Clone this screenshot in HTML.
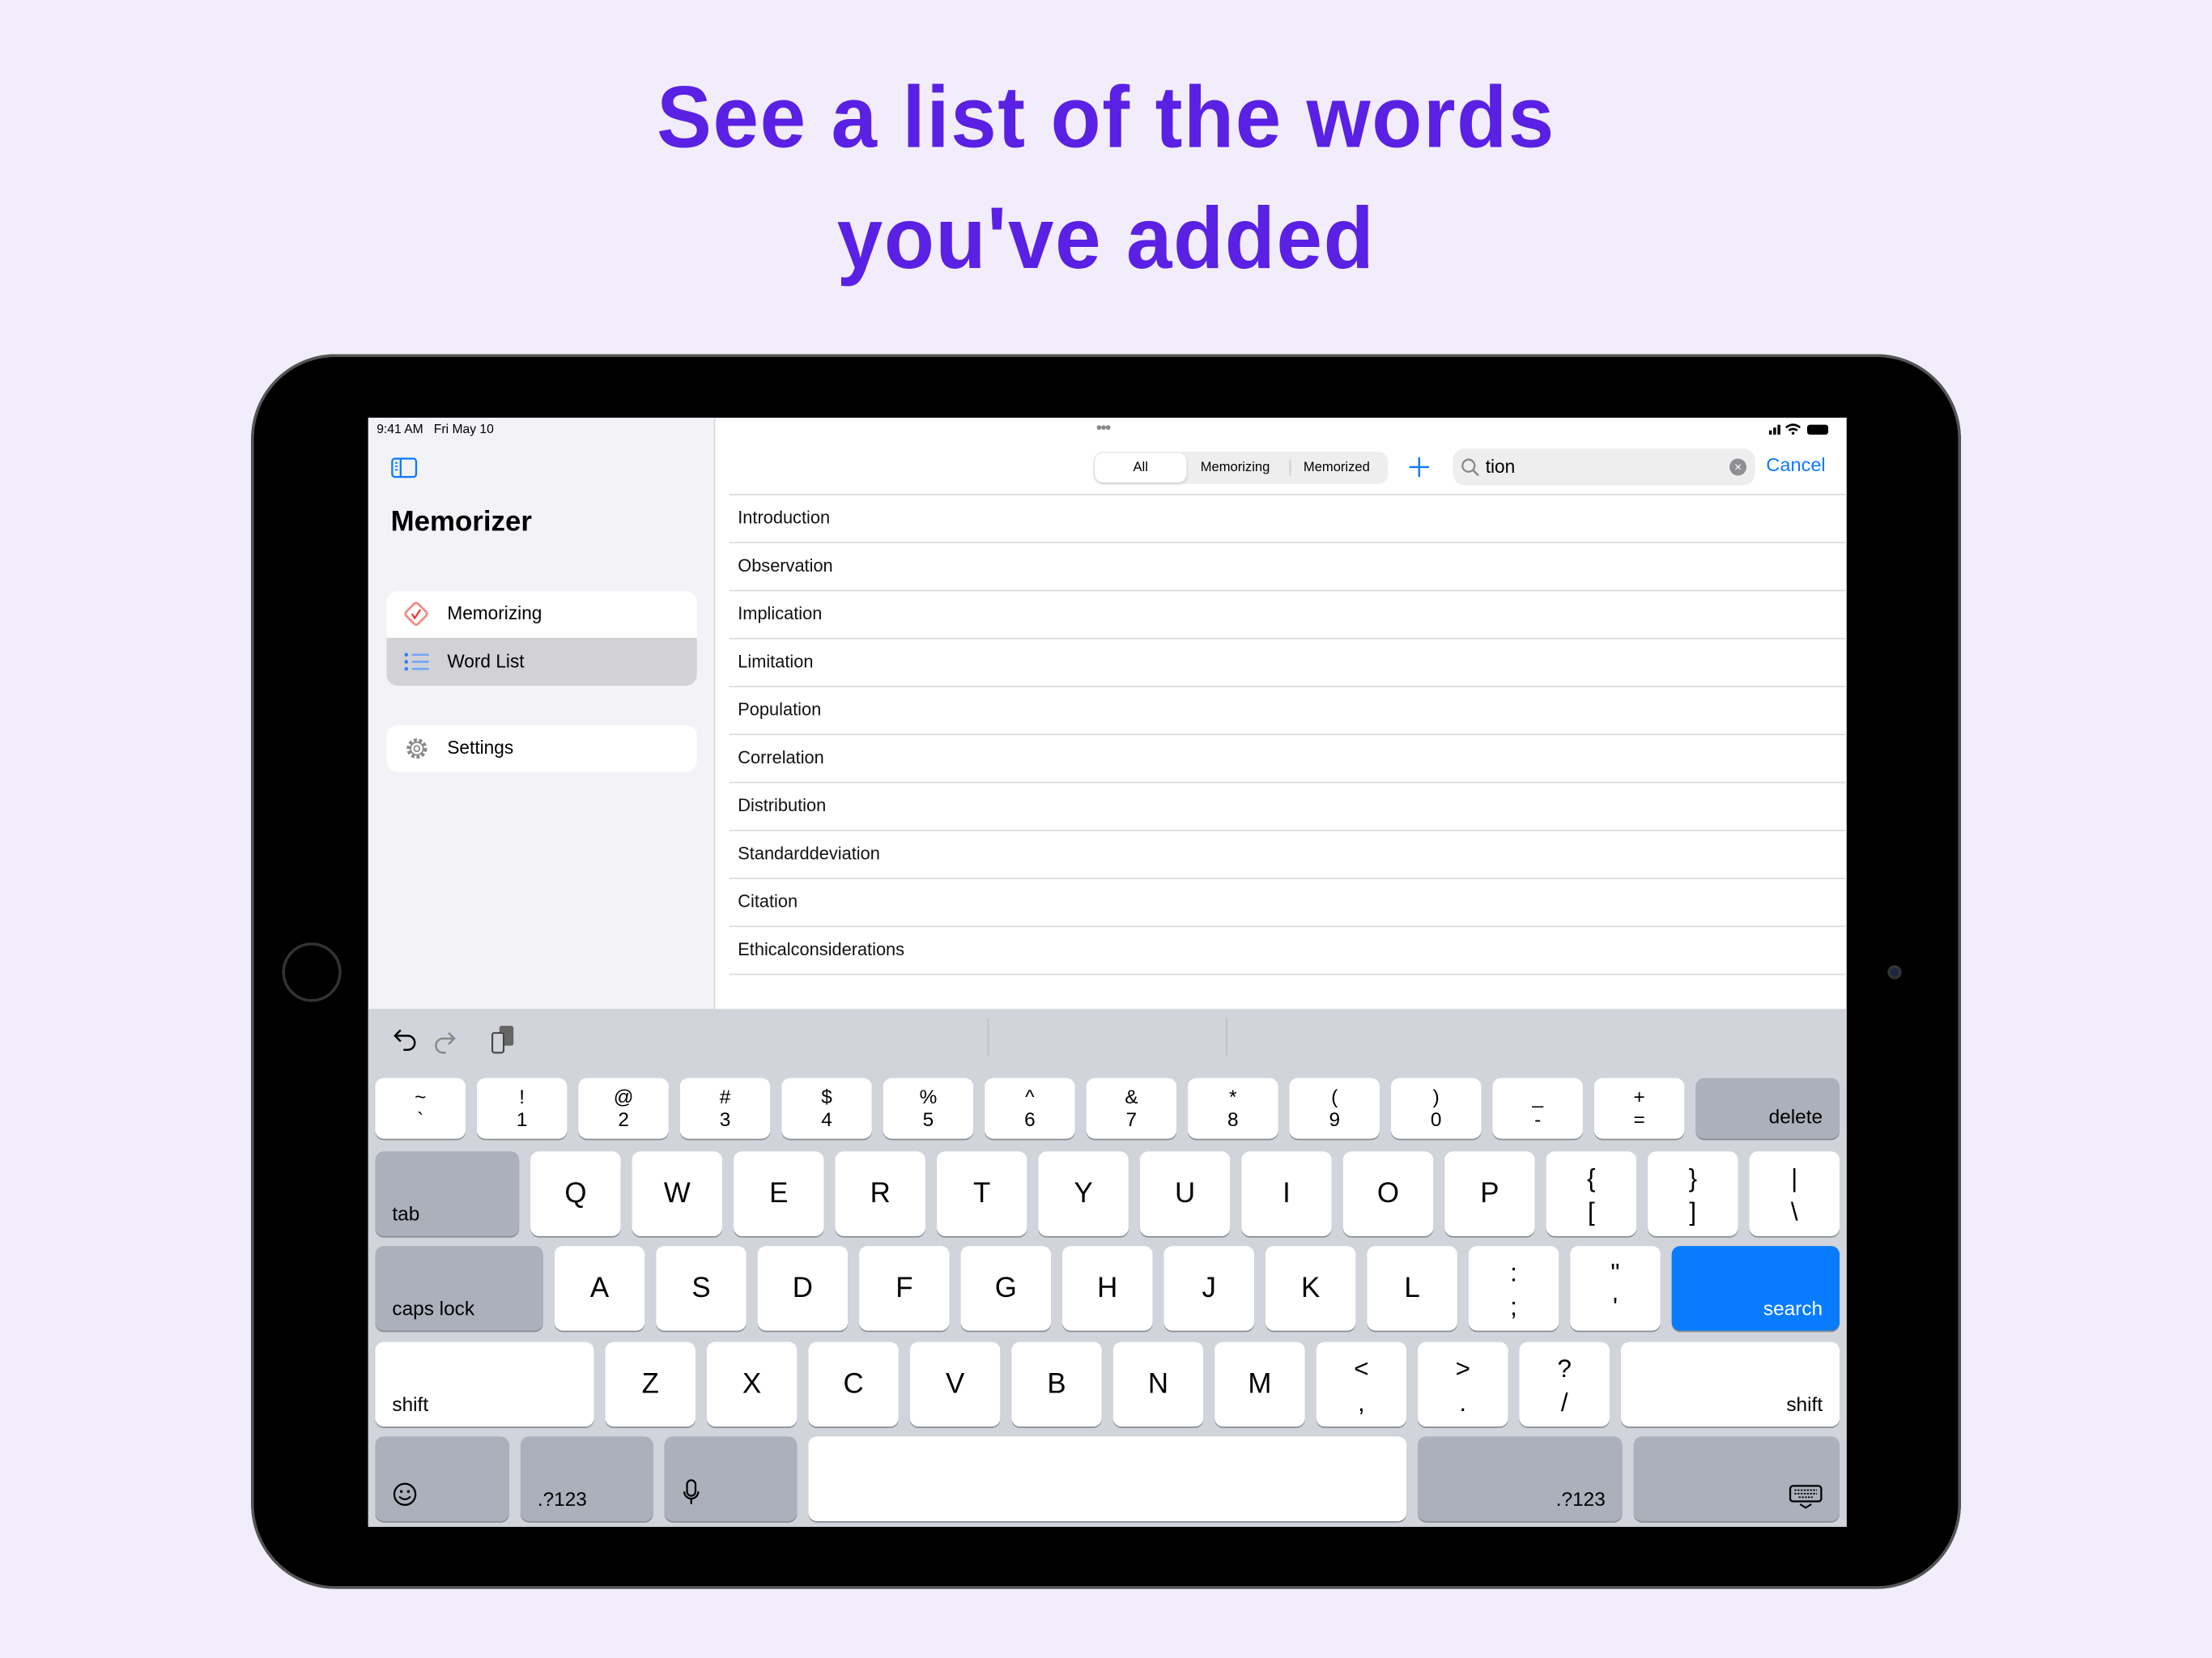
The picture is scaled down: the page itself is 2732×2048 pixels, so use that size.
<!DOCTYPE html>
<html><head><meta charset="utf-8"><style>
*{margin:0;padding:0;box-sizing:border-box}
html,body{width:2732px;height:2048px;overflow:hidden;background:#f1edfb}
#w{position:absolute;left:0;top:0;width:1568px;height:1175px;transform:scale(1.74235,1.743);transform-origin:0 0;font-family:"Liberation Sans",sans-serif}
.a{position:absolute}
.t{position:absolute;left:0;width:1568px;text-align:center;color:#5a20e3;font-weight:bold;font-size:62px;transform:scaleX(0.94);transform-origin:784px 0;letter-spacing:1px}
.row{position:absolute;left:517px;width:792px;height:34px;border-bottom:1px solid #dcdce0;font-size:12.5px;color:#111;padding:9px 0 0 6px}
.k{position:absolute;background:#fff;border-radius:6px;box-shadow:0 1px 0 #8b8d92;color:#000;text-align:center}
.g{background:#abb0bb}
.n{width:64px;height:43px;font-size:14px;line-height:16px;padding-top:5px}
.l{width:64px;height:60px;font-size:20px;line-height:60px}
.d{width:64px;height:60px;font-size:18px;line-height:24px;padding-top:7px}
.s{font-size:14px}
.bl{position:absolute;left:12px;bottom:8px}
.br{position:absolute;right:12px;bottom:8px}
</style></head><body><div id="w">
<div class="t" style="top:48px">See a list of the words</div>
<div class="t" style="top:134px">you've added</div>

<div class="a" style="left:178px;top:251px;width:1212px;height:875px;background:#000;border-radius:60px;box-shadow:0 0 0 2px #555 inset"></div>
<div class="a" style="left:200px;top:668px;width:42px;height:42px;border:2px solid #333;border-radius:50%"></div>
<div class="a" style="left:1338px;top:684px;width:10px;height:10px;background:#1d2640;border-radius:50%;border:2px solid #333"></div>

<div class="a" style="left:261px;top:296px;width:1048px;height:786px;background:#fff;overflow:hidden">
 <div class="a" style="left:0;top:0;width:246px;height:420px;background:#f2f2f7;border-right:1px solid #d8d8dc"></div>
 <div class="a" style="left:6px;top:3px;font-size:9px">9:41 AM &nbsp; Fri May 10</div>
 <div class="a" style="left:516px;top:0;font-size:12px;color:#888;letter-spacing:-1px">•••</div>
 <svg class="a" style="left:990px;top:3px" width="50" height="10"><rect x="3" y="6" width="2" height="3" fill="#000"/><rect x="6" y="4" width="2" height="5"/><rect x="9" y="2" width="2" height="7"/><path d="M15 4q5-4 10 0M17 6q3-2 6 0" stroke="#000" fill="none" stroke-width="1.5"/><circle cx="20" cy="8" r="1"/><rect x="30" y="2" width="15" height="7" rx="2" fill="#000"/></svg>
 <svg class="a" style="left:16px;top:28px" width="20" height="15"><rect x="1" y="1" width="17" height="13" rx="2" fill="none" stroke="#0a7aff" stroke-width="1.3"/><line x1="7" y1="1" x2="7" y2="14" stroke="#0a7aff" stroke-width="1.3"/><path d="M3 4h2M3 6.5h2M3 9h2" stroke="#0a7aff"/></svg>
 <div class="a" style="left:16px;top:63px;font-size:20px;font-weight:bold">Memorizer</div>
 <div class="a" style="left:13px;top:123px;width:220px;height:33px;background:#fff;border-radius:8px 8px 0 0"></div>
 <div class="a" style="left:13px;top:156px;width:220px;height:34px;background:#d1d1d6;border-radius:0 0 8px 8px"></div>
 <svg class="a" style="left:24px;top:129px" width="20" height="20"><rect x="4" y="4" width="12" height="12" transform="rotate(45 10 10)" fill="none" stroke="#f28a85" stroke-width="1.6" rx="2"/><path d="M7 10l2 3 4-6" stroke="#e33" fill="none" stroke-width="1.3"/></svg>
 <div class="a" style="left:56px;top:131px;font-size:13px">Memorizing</div>
 <svg class="a" style="left:25px;top:166px" width="20" height="14"><g fill="#2f7ff7"><circle cx="2" cy="2" r="1.3"/><circle cx="2" cy="7" r="1.3"/><circle cx="2" cy="12" r="1.3"/></g><path d="M6 2h12M6 7h12M6 12h12" stroke="#6ea6f7" stroke-width="1.5"/></svg>
 <div class="a" style="left:56px;top:165px;font-size:13px">Word List</div>
 <div class="a" style="left:13px;top:218px;width:220px;height:33px;background:#fff;border-radius:8px"></div>
 <svg class="a" style="left:25px;top:225px" width="19" height="19"><circle cx="9.5" cy="9.5" r="6" fill="none" stroke="#888" stroke-width="2.4" stroke-dasharray="2.2 1.5"/><circle cx="9.5" cy="9.5" r="4.5" fill="#fff" stroke="#888" stroke-width="1"/><circle cx="9.5" cy="9.5" r="2" fill="none" stroke="#888"/></svg>
 <div class="a" style="left:56px;top:226px;font-size:13px">Settings</div>

 <div class="a" style="left:514px;top:24px;width:209px;height:23px;background:#eeeeef;border-radius:7px"></div>
 <div class="a" style="left:515px;top:25px;width:65px;height:21px;background:#fff;border-radius:6px;box-shadow:0 1px 2px rgba(0,0,0,.15);font-size:9.5px;text-align:center;line-height:21px">All</div>
 <div class="a" style="left:590px;top:25px;font-size:9.5px;line-height:21px">Memorizing</div>
 <div class="a" style="left:653px;top:30px;width:1px;height:11px;background:#ccc"></div>
 <div class="a" style="left:663px;top:25px;font-size:9.5px;line-height:21px">Memorized</div>
 <svg class="a" style="left:737px;top:27px" width="16" height="16"><path d="M8 1v14M1 8h14" stroke="#0a7aff" stroke-width="1.4"/></svg>
 <div class="a" style="left:769px;top:22px;width:214px;height:26px;background:#eeeeef;border-radius:8px"></div>
 <svg class="a" style="left:774px;top:28px" width="14" height="14"><circle cx="6" cy="6" r="4.3" fill="none" stroke="#888" stroke-width="1.3"/><path d="M9 9l4 4" stroke="#888" stroke-width="1.4"/></svg>
 <div class="a" style="left:792px;top:27px;font-size:13px">tion</div>
 <div class="a" style="left:965px;top:29px;width:12px;height:12px;border-radius:50%;background:#8e8e93;color:#fff;font-size:9px;text-align:center;line-height:12px">×</div>
 <div class="a" style="left:991px;top:26px;font-size:13.5px;color:#0a7aff">Cancel</div>
 <div class="a" style="left:256px;top:54px;width:792px;height:1px;background:#dcdce0"></div>
</div>

<div class="row" style="top:351px">Introduction</div>
<div class="row" style="top:385px">Observation</div>
<div class="row" style="top:419px">Implication</div>
<div class="row" style="top:453px">Limitation</div>
<div class="row" style="top:487px">Population</div>
<div class="row" style="top:521px">Correlation</div>
<div class="row" style="top:555px">Distribution</div>
<div class="row" style="top:589px">Standarddeviation</div>
<div class="row" style="top:623px">Citation</div>
<div class="row" style="top:657px">Ethicalconsiderations</div>

<div class="a" style="left:261px;top:715px;width:1048px;height:367px;background:#d1d4da"></div>
<div class="a" style="left:700px;top:722px;width:1px;height:26px;background:#bcc0c7"></div>
<div class="a" style="left:869px;top:722px;width:1px;height:26px;background:#bcc0c7"></div>
<svg class="a" style="left:278px;top:726px" width="90" height="22"><path d="M6 4l-4 4 4 4M2 8h9a5 5 0 0 1 0 10h-3" fill="none" stroke="#000" stroke-width="1.4"/><path d="M40 6l4 4-4 4M44 10h-8a5 5 0 0 0 0 10h2" fill="none" stroke="#888" stroke-width="1.4"/><rect x="76" y="1" width="10" height="14" rx="1.5" fill="#666"/><rect x="71" y="6" width="8" height="14" rx="1.5" fill="#d1d4da" stroke="#444" stroke-width="1.2"/></svg>

<div class="k n" style="left:266px;top:764px">~<br>`</div>
<div class="k n" style="left:338px;top:764px">!<br>1</div>
<div class="k n" style="left:410px;top:764px">@<br>2</div>
<div class="k n" style="left:482px;top:764px">#<br>3</div>
<div class="k n" style="left:554px;top:764px">$<br>4</div>
<div class="k n" style="left:626px;top:764px">%<br>5</div>
<div class="k n" style="left:698px;top:764px">^<br>6</div>
<div class="k n" style="left:770px;top:764px">&amp;<br>7</div>
<div class="k n" style="left:842px;top:764px">*<br>8</div>
<div class="k n" style="left:914px;top:764px">(<br>9</div>
<div class="k n" style="left:986px;top:764px">)<br>0</div>
<div class="k n" style="left:1058px;top:764px">_<br>-</div>
<div class="k n" style="left:1130px;top:764px">+<br>=</div>
<div class="k g s" style="left:1202px;top:764px;width:102px;height:43px"><span class="br">delete</span></div>
<div class="k g s" style="left:266px;top:816px;width:102px;height:60px"><span class="bl">tab</span></div>
<div class="k l" style="left:376px;top:816px">Q</div>
<div class="k l" style="left:448px;top:816px">W</div>
<div class="k l" style="left:520px;top:816px">E</div>
<div class="k l" style="left:592px;top:816px">R</div>
<div class="k l" style="left:664px;top:816px">T</div>
<div class="k l" style="left:736px;top:816px">Y</div>
<div class="k l" style="left:808px;top:816px">U</div>
<div class="k l" style="left:880px;top:816px">I</div>
<div class="k l" style="left:952px;top:816px">O</div>
<div class="k l" style="left:1024px;top:816px">P</div>
<div class="k d" style="left:1096px;top:816px">{<br>[</div>
<div class="k d" style="left:1168px;top:816px">}<br>]</div>
<div class="k d" style="left:1240px;top:816px">|<br>\</div>
<div class="k g s" style="left:266px;top:883px;width:119px;height:60px"><span class="bl">caps lock</span></div>
<div class="k l" style="left:393px;top:883px">A</div>
<div class="k l" style="left:465px;top:883px">S</div>
<div class="k l" style="left:537px;top:883px">D</div>
<div class="k l" style="left:609px;top:883px">F</div>
<div class="k l" style="left:681px;top:883px">G</div>
<div class="k l" style="left:753px;top:883px">H</div>
<div class="k l" style="left:825px;top:883px">J</div>
<div class="k l" style="left:897px;top:883px">K</div>
<div class="k l" style="left:969px;top:883px">L</div>
<div class="k d" style="left:1041px;top:883px">:<br>;</div>
<div class="k d" style="left:1113px;top:883px">"<br>'</div>
<div class="k s" style="left:1185px;top:883px;width:119px;height:60px;background:#087cfe;color:#fff"><span class="br">search</span></div>
<div class="k s" style="left:266px;top:951px;width:155px;height:60px"><span class="bl">shift</span></div>
<div class="k l" style="left:429px;top:951px">Z</div>
<div class="k l" style="left:501px;top:951px">X</div>
<div class="k l" style="left:573px;top:951px">C</div>
<div class="k l" style="left:645px;top:951px">V</div>
<div class="k l" style="left:717px;top:951px">B</div>
<div class="k l" style="left:789px;top:951px">N</div>
<div class="k l" style="left:861px;top:951px">M</div>
<div class="k d" style="left:933px;top:951px">&lt;<br>,</div>
<div class="k d" style="left:1005px;top:951px">&gt;<br>.</div>
<div class="k d" style="left:1077px;top:951px">?<br>/</div>
<div class="k s" style="left:1149px;top:951px;width:155px;height:60px"><span class="br">shift</span></div>
<div class="k g" style="left:266px;top:1018px;width:95px;height:60px"><svg class="a" style="left:12px;top:32px" width="18" height="18"><circle cx="9" cy="9" r="7.5" fill="none" stroke="#000" stroke-width="1.3"/><circle cx="6.5" cy="7" r="1" /><circle cx="11.5" cy="7" r="1"/><path d="M5 10.5q4 4 8 0" fill="none" stroke="#000" stroke-width="1.2"/></svg></div>
<div class="k g s" style="left:369px;top:1018px;width:94px;height:60px"><span class="bl">.?123</span></div>
<div class="k g" style="left:471px;top:1018px;width:94px;height:60px"><svg class="a" style="left:12px;top:30px" width="14" height="20"><rect x="4" y="1" width="6" height="11" rx="3" fill="none" stroke="#000" stroke-width="1.3"/><path d="M2 9a5 5 0 0 0 10 0M7 14v4" fill="none" stroke="#000" stroke-width="1.3"/></svg></div>
<div class="k" style="left:573px;top:1018px;width:424px;height:60px"></div>
<div class="k g s" style="left:1005px;top:1018px;width:145px;height:60px"><span class="br">.?123</span></div>
<div class="k g" style="left:1158px;top:1018px;width:146px;height:60px"><svg class="a" style="right:12px;top:34px" width="24" height="18"><rect x="1" y="1" width="22" height="11" rx="2" fill="none" stroke="#000" stroke-width="1.3"/><path d="M4 4h16M4 6.5h16M7 9h10" stroke="#000" stroke-dasharray="1.4 0.8"/><path d="M8 14l4 2.5 4-2.5" fill="none" stroke="#000" stroke-width="1.2"/></svg></div>
</div></body></html>
